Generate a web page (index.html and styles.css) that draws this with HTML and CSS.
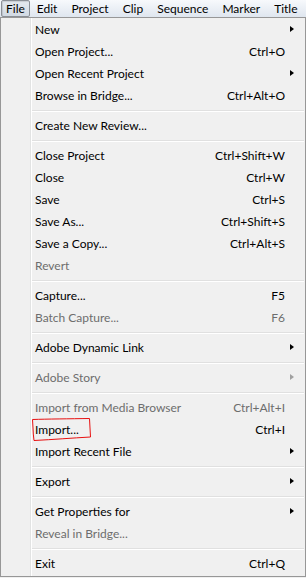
FILE: index.html
```html
<!DOCTYPE html>
<html lang="en">
<head>
    <meta charset="UTF-8">
    <title>File menu</title>
    <link rel="stylesheet" href="styles.css">
</head>
<body>
    <!-- Menu bar -->
    <div class="menubar">
        <span class="menubar-item is-open">File</span>
        <span class="menubar-item">Edit</span>
        <span class="menubar-item">Project</span>
        <span class="menubar-item">Clip</span>
        <span class="menubar-item">Sequence</span>
        <span class="menubar-item">Marker</span>
        <span class="menubar-item">Title</span>
    </div>

    <!-- File dropdown -->
    <div class="menu">
        <div class="menu-item has-sub"><span class="label">New</span><span class="shortcut"></span><span class="submark"></span></div>
        <div class="menu-item"><span class="label">Open Project...</span><span class="shortcut">Ctrl+O</span><span class="submark"></span></div>
        <div class="menu-item has-sub"><span class="label">Open Recent Project</span><span class="shortcut"></span><span class="submark"></span></div>
        <div class="menu-item"><span class="label">Browse in Bridge...</span><span class="shortcut">Ctrl+Alt+O</span><span class="submark"></span></div>
        <div class="menu-sep"></div>
        <div class="menu-item"><span class="label">Create New Review...</span><span class="shortcut"></span><span class="submark"></span></div>
        <div class="menu-sep"></div>
        <div class="menu-item"><span class="label">Close Project</span><span class="shortcut">Ctrl+Shift+W</span><span class="submark"></span></div>
        <div class="menu-item"><span class="label">Close</span><span class="shortcut">Ctrl+W</span><span class="submark"></span></div>
        <div class="menu-item"><span class="label">Save</span><span class="shortcut">Ctrl+S</span><span class="submark"></span></div>
        <div class="menu-item"><span class="label">Save As...</span><span class="shortcut">Ctrl+Shift+S</span><span class="submark"></span></div>
        <div class="menu-item"><span class="label">Save a Copy...</span><span class="shortcut">Ctrl+Alt+S</span><span class="submark"></span></div>
        <div class="menu-item is-disabled"><span class="label">Revert</span><span class="shortcut"></span><span class="submark"></span></div>
        <div class="menu-sep"></div>
        <div class="menu-item"><span class="label">Capture...</span><span class="shortcut">F5</span><span class="submark"></span></div>
        <div class="menu-item is-disabled"><span class="label">Batch Capture...</span><span class="shortcut">F6</span><span class="submark"></span></div>
        <div class="menu-sep"></div>
        <div class="menu-item has-sub"><span class="label">Adobe Dynamic Link</span><span class="shortcut"></span><span class="submark"></span></div>
        <div class="menu-sep"></div>
        <div class="menu-item has-sub is-disabled"><span class="label">Adobe Story</span><span class="shortcut"></span><span class="submark"></span></div>
        <div class="menu-sep"></div>
        <div class="menu-item is-disabled"><span class="label">Import from Media Browser</span><span class="shortcut">Ctrl+Alt+I</span><span class="submark"></span></div>
        <div class="menu-item is-marked">
            <span class="label">Import...</span><span class="shortcut">Ctrl+I</span><span class="submark"></span>
            <!-- red pen mark from the screenshot -->
            <svg class="pen-mark" width="100" height="24" viewBox="0 0 100 24">
                <path d="M30.5 1.5 C45 1 68 0.8 87.5 0.5 L88 10 L88.5 19 C70 20 52 21.5 32 22.5 C31.5 18 31 14 31 10 Z"
                      fill="none" stroke="#e81010" stroke-width="1"/>
            </svg>
        </div>
        <div class="menu-item has-sub"><span class="label">Import Recent File</span><span class="shortcut"></span><span class="submark"></span></div>
        <div class="menu-sep"></div>
        <div class="menu-item has-sub"><span class="label">Export</span><span class="shortcut"></span><span class="submark"></span></div>
        <div class="menu-sep"></div>
        <div class="menu-item has-sub"><span class="label">Get Properties for</span><span class="shortcut"></span><span class="submark"></span></div>
        <div class="menu-item is-disabled"><span class="label">Reveal in Bridge...</span><span class="shortcut"></span><span class="submark"></span></div>
        <div class="menu-sep"></div>
        <div class="menu-item"><span class="label">Exit</span><span class="shortcut">Ctrl+Q</span><span class="submark"></span></div>
    </div>
</body>
</html>
```

FILE: styles.css
```css
body {
    margin: 0;
    background-color: #f0f0f0;
    font-family: Lato, "Liberation Sans", sans-serif;
    font-size: 12px;
    color: #000;
}

.menubar {
    display: flex;
    height: 17px;
    background: linear-gradient(to bottom, #f7f9fc, #dfe6ef);
}

.menubar-item {
    display: flex;
    align-items: center;
    padding: 0 7px;
    line-height: 14px;
}

.menubar-item.is-open {
    margin-left: 1px;
    padding: 0 4px;
    height: 15px;
    border: 1px solid #8a8f96;
    border-radius: 2px;
    background: linear-gradient(to bottom, #e4e9ef, #d2dae3);
    box-shadow: inset 1px 1px 1px rgba(0, 0, 0, 0.12);
}

.menu {
    border: 1px solid #979797;
    padding: 0 1px 2px;
    background-color: #f0f0f0;
    background-image: linear-gradient(to right,
        transparent 29px, #e2e3e3 29px, #e2e3e3 30px,
        #ffffff 30px, #ffffff 31px, transparent 31px);
}

.menu-item {
    position: relative;
    display: grid;
    grid-template-columns: 1fr auto 19px;
    align-items: center;
    height: 22px;
    padding-left: 33px;
    white-space: nowrap;
}

.menu-item.is-disabled {
    color: #6d6d6d;
}

.submark {
    display: flex;
    align-items: center;
    height: 100%;
}

.has-sub .submark::before {
    content: "";
    margin-left: 5px;
    border-left: 4px solid #000;
    border-top: 3.5px solid transparent;
    border-bottom: 3.5px solid transparent;
}

.has-sub.is-disabled .submark::before {
    border-left-color: #a0a0a0;
}

.menu-sep {
    height: 8px;
    margin-left: 30px;
    background: linear-gradient(to bottom,
        transparent 4px, #e0e0e0 4px, #e0e0e0 5px,
        #ffffff 5px, #ffffff 6px, transparent 6px);
}

.pen-mark {
    position: absolute;
    left: 0;
    top: 0;
    overflow: visible;
}
```
